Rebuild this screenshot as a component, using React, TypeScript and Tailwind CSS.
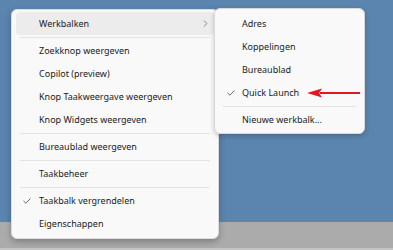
import { ChevronRight } from "lucide-react";

type Entry = { label: string; checked?: boolean; hover?: boolean; sub?: boolean } | "sep";

const mainItems: Entry[] = [
  { label: "Werkbalken", hover: true, sub: true },
  "sep",
  { label: "Zoekknop weergeven" },
  { label: "Copilot (preview)" },
  { label: "Knop Taakweergave weergeven" },
  { label: "Knop Widgets weergeven" },
  "sep",
  { label: "Bureaublad weergeven" },
  "sep",
  { label: "Taakbeheer" },
  "sep",
  { label: "Taakbalk vergrendelen", checked: true },
  { label: "Eigenschappen" },
];

const subItems: Entry[] = [
  { label: "Adres" },
  { label: "Koppelingen" },
  { label: "Bureaublad" },
  { label: "Quick Launch", checked: true },
  "sep",
  { label: "Nieuwe werkbalk..." },
];

function Check() {
  return (
    <svg width="8" height="6" viewBox="0 0 8 6" fill="none" aria-hidden>
      <path d="M0.8 3.2 2.8 5.2 7.2 0.8" stroke="#555" strokeWidth="0.9" strokeLinecap="round" strokeLinejoin="round" />
    </svg>
  );
}

function MenuList({ items, indent }: { items: Entry[]; indent: "main" | "sub" }) {
  return (
    <>
      {items.map((item, i) =>
        item === "sep" ? (
          <div key={i} className="flex h-[4px] items-center px-[8px]">
            <div className="h-px w-full bg-[#e3e3e3]" />
          </div>
        ) : (
          <div
            key={i}
            className={`mx-[4px] flex h-[23px] items-center rounded-[4px] ${
              item.hover ? "bg-[#ececec]" : ""
            }`}
          >
            <span className={`flex h-full items-center ${indent === "main" ? "w-[23px] pl-[7px]" : "w-[23px] pl-[8px]"}`}>
              {item.checked ? <Check /> : null}
            </span>
            <span className="flex-1 text-[9px] text-[#1b1b1b]">{item.label}</span>
            {item.sub ? (
              <ChevronRight size={11} strokeWidth={1.3} className="mr-[3px] text-[#444]" />
            ) : null}
          </div>
        )
      )}
    </>
  );
}

export default function App() {
  return (
    <div
      className="relative flex h-[250px] w-[393px] flex-col overflow-hidden"
      style={{ fontFamily: '"Noto Sans", "Open Sans", sans-serif' }}
    >
      <div className="flex-1 bg-[#5b84ae]" />
      <div className="h-[28px] border-b-2 border-[#c4c4c4] bg-[#ababab]" />

      <div className="absolute left-[11px] top-[9px] w-[208px] rounded-[6px] border border-[#dcdcdc] bg-[#f9f9f9] pb-[3px] pt-[2px] shadow-[0_3px_6px_rgba(0,0,0,0.25)]">
        <MenuList items={mainItems} indent="main" />
      </div>

      <div className="absolute left-[214px] top-[8px] w-[151px] rounded-[6px] border border-[#d8d8d8] bg-[#f9f9f9] pb-[2px] pt-[3px] shadow-[0_2px_5px_rgba(0,0,0,0.2)]">
        <MenuList items={subItems} indent="sub" />
      </div>

      <svg className="absolute left-[306px] top-[87px]" width="56" height="12" viewBox="0 0 56 12" aria-hidden>
        <path d="M14 6 H54" stroke="#e5161d" strokeWidth="2" />
        <path d="M1 6 L16 1.5 L13 6 L16 10.5 Z" fill="#e5161d" />
      </svg>
    </div>
  );
}
